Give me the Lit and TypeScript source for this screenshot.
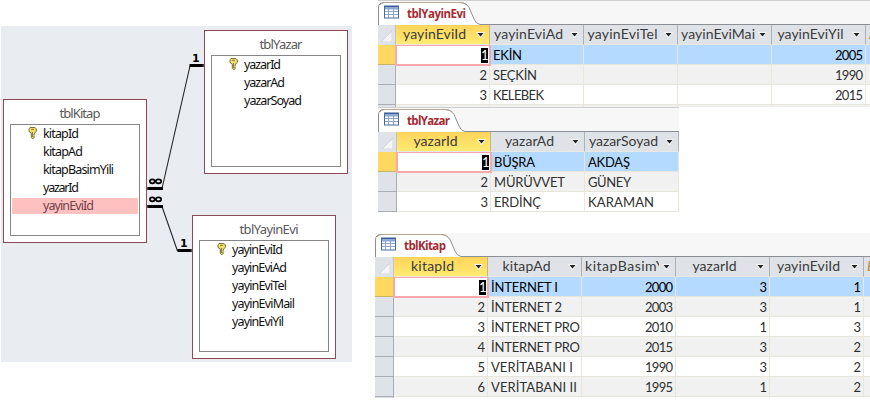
import { LitElement, html, css, svg } from "lit";
import { customElement, property } from "lit/decorators.js";
import { classMap } from "lit/directives/class-map.js";
import { styleMap } from "lit/directives/style-map.js";

/** A label whose tracking is adjusted so that it spans a given width. */
@customElement("fit-text")
class FitText extends LitElement {
  @property() text = "";
  @property({ type: Number }) span = 0;

  static styles = css`
    :host { display: inline-block; white-space: pre; }
    span { display: inline-block; }
  `;

  render() {
    return html`<span>${this.text}</span>`;
  }

  updated() {
    const el = this.renderRoot.querySelector("span") as HTMLElement;
    el.style.letterSpacing = "0px";
    const count = this.text.length;
    if (!this.span || count < 2) return;
    const gap = (this.span - el.getBoundingClientRect().width) / (count - 1);
    el.style.letterSpacing = `${gap}px`;
    el.style.marginRight = `${-gap}px`;
  }
}

type Label = [text: string, width: number];

@customElement("relation-table")
class RelationTable extends LitElement {
  @property() name = "";
  @property({ type: Number }) span = 0;
  @property({ attribute: false }) fields: Label[] = [];
  @property() selected = "";

  static styles = css`
    :host {
      display: block; box-sizing: border-box; width: 144px; height: 144px;
      border: 1px solid #874c58; background: #fff; padding: 0 6px;
      font: 12.5px/20px "Noto Sans", "Open Sans", sans-serif; color: #111;
      box-shadow: 0 0 2px #f5dfe4;
    }
    .title { height: 24px; line-height: 27px; text-align: center; font-size: 13px; color: #595959; padding-left: 10px; }
    .list { box-sizing: border-box; height: 112px; border: 1px solid #858585; padding: 0 1px; }
    .field { display: flex; height: 18px; align-items: center; }
    .field.on { background: #ffc0c0; height: 16px; margin: 1px 0; color: #70434a; line-height: 18px; }
    .icon { width: 31px; flex: none; display: flex; justify-content: flex-end; box-sizing: border-box; padding-right: 6px; height: 14px; }
  `;

  render() {
    return html`
      <div class="title"><fit-text .text=${this.name} .span=${this.span}></fit-text></div>
      <div class="list">
        ${this.fields.map(([text, width], i) => html`
          <div class=${classMap({ field: true, on: text === this.selected })}>
            <div class="icon">${i === 0 ? svg`
              <svg width="9" height="12" viewBox="0 0 9 12">
                <path d="M2 .5h5l1.3 1.4v2.4L6.5 6.2v1l-.9.9.9.8-.9 1 .7.7-1.6 1-1.4-1V6.2L1 4.5V1.9z"
                  fill="#efe06a" stroke="#6c6330" stroke-width=".9"/>
                <path d="M3.2 2.4h2.7M4.4 5v5" stroke="#756b35" stroke-width=".9"/>
              </svg>` : null}</div>
            <fit-text .text=${text} .span=${width}></fit-text>
          </div>`)}
      </div>`;
  }
}

interface Column { title: string; width: number; text: number; left?: boolean; numeric?: boolean; rest?: boolean }

@customElement("data-sheet")
class DataSheet extends LitElement {
  @property() name = "";
  @property({ type: Number }) span = 0;
  @property({ type: Number }) tab = 100;
  @property({ type: Number }) selector = 18;
  @property({ attribute: false }) columns: Column[] = [];
  @property({ attribute: false }) rows: Label[][] = [];

  static styles = css`
    :host { display: block; overflow: hidden; background: #fff; font: 13px/20px Lato, "Noto Sans", sans-serif; color: #303030; }
    .strip { display: block; height: 25px; background: #f7f7f7; border-top: 1px solid var(--strip-edge, #cfcfcf); box-sizing: border-box; position: relative; }
    .shape { display: block; }
    .caption { position: absolute; left: 29px; top: 3px; font: bold 11.5px/20px "Open Sans", "Noto Sans", sans-serif; color: #a52a33; }
    .grid { display: grid; grid-auto-rows: 20px; }
    .head, .cell, .sel, .corner { box-sizing: border-box; height: 20px; overflow: hidden; white-space: nowrap; display: flex; }
    .head { background: #dfe3e8; border-right: 1px solid #adb1b8; border-bottom: 1px solid #e8e8e4; font-size: 14px; line-height: 18px; color: #3b3b3b; }
    .head.key { background: linear-gradient(#ffd45c, #ffeb70); border-right-color: #c8b77d; }
    .head.new { border-right: 0; color: #c58a32; font-style: italic; padding-left: 3px; }
    .label { flex: 1; min-width: 0; overflow: hidden; display: flex; justify-content: center; }
    .label.left { justify-content: flex-start; padding-left: 3px; }
    .arrow { width: 15px; flex: none; display: flex; align-items: center; justify-content: center; padding-right: 1px; }
    .corner { background: #dfe3e8; border-right: 1px solid #c0c4ca; justify-content: flex-end; align-items: flex-end; padding: 0 3px 3px 0; }
    .sel { background: #dfe3e8; border-right: 1px solid #a9adb5; border-bottom: 1px solid #a9adb5; }
    .sel.on { background: #ffd95f; border-bottom-color: #c7b36d; }
    .cell { border-right: 1px solid #e9e7dc; border-bottom: 1px solid #e9e7dc; padding-left: 3px; }
    .cell.alt { background: #f1f1f1; }
    .cell.on { background: #b5daff; color: #000; }
    .cell.num { justify-content: flex-end; padding: 0 2px 0 0; }
    .cell.rest { border-right: 0; }
    .cell.active { z-index: 1; margin: 0 -1px; height: 21px; background: #fff; border: 2px solid #f8a9ab; border-top-width: 1px; padding: 0 1px 0 0; line-height: 18px; }
    .mark { background: #000; color: #fff; width: 7px; height: 15px; margin-top: 2px; line-height: 15px; text-align: center; }
  `;

  private heading(col: Column, i: number) {
    if (col.rest) return html`<div class="head new">${col.title}</div>`;
    return html`
      <div class=${classMap({ head: true, key: i === 0 })}>
        <div class=${classMap({ label: true, left: !!col.left })}><fit-text .text=${col.title} .span=${col.text}></fit-text></div>
        <div class="arrow"><svg width="9" height="6"><path d="M0 0h9L5 6H4z" fill="#f4f5f6"/><path d="M1.5 1h6L4.5 4.5z" fill="#252525"/></svg></div>
      </div>`;
  }

  render() {
    const t = this.tab;
    const tracks = [this.selector, ...this.columns.map((c) => c.width)].map((w) => `${w}px`).join(" ");
    const edge = `H${t - 17}Q${t - 11} 1.5 ${t - 8} 6.5L${t - 3} 18Q${t - 1} 23 ${t + 3} 23.5`;
    return html`
      <div class="strip">
        <svg class="shape" width="520" height="24">
          <path d="M0 25V7Q0 1.5 6 1.5${edge}V25Z" fill="#fff"/>
          <path d="M.5 24V7Q.5 1.5 6 1.5${edge}H520" fill="none" stroke="#8d8f96"/>
          <path d="M2 4Q3 1.5 7 1.5H${t - 17}Q${t - 12} 1.5 ${t - 9} 5" fill="none" stroke="#b7a89a"/>
          <rect x="6" y="5" width="15" height="12" fill="#fff"/>
          <path d="M6 5.5h15" stroke="#3b5d9b" stroke-width="2"/>
          <path d="M6 7.5h15" stroke="#8ba8d5" stroke-width="2"/>
          <path d="M6 10.5h15M6 13.5h15M10.5 8v9M15.5 8v9" stroke="#8da6c8"/>
          <path d="M6.5 5v12M20.5 5v12M6 17h15" stroke="#486a9e" fill="none"/>
        </svg>
        <fit-text class="caption" .text=${this.name} .span=${this.span}></fit-text>
      </div>
      <div class="grid" style=${styleMap({ gridTemplateColumns: tracks })}>
        <div class="corner"><svg width="11" height="11"><path d="M11 0v11H0z" fill="#f3f5f7" stroke="#c6cbd3" stroke-width=".7"/></svg></div>
        ${this.columns.map((c, i) => this.heading(c, i))}
        ${this.rows.map((row, r) => html`
          <div class=${classMap({ sel: true, on: r === 0 })}></div>
          ${this.columns.map((c, i) => {
            const [text, width] = row[i] ?? ["", 0];
            const active = r === 0 && i === 0;
            return html`<div class=${classMap({ cell: true, alt: r % 2 === 1, on: r === 0 && !active, num: !!c.numeric, rest: !!c.rest, active })}>
              ${active ? html`<span class="mark">${text}</span>` : text ? html`<fit-text .text=${text} .span=${width}></fit-text>` : null}
            </div>`;
          })}`)}
      </div>`;
  }
}

const n = (value: number): Label => [String(value), value > 999 ? 28 : 0];

const publisherColumns: Column[] = [
  { title: "yayinEviId", width: 94, text: 63, numeric: true },
  { title: "yayinEviAd", width: 94, text: 69 },
  { title: "yayinEviTel", width: 94, text: 70 },
  { title: "yayinEviMai", width: 94, text: 74, left: true },
  { title: "yayinEviYil", width: 94, text: 66, numeric: true },
  { title: "A", width: 10, text: 0, rest: true },
];
const publisherRows: Label[][] = [
  [n(1), ["EKİN", 29], ["", 0], ["", 0], n(2005)],
  [n(2), ["SEÇKİN", 44], ["", 0], ["", 0], n(1990)],
  [n(3), ["KELEBEK", 51], ["", 0], ["", 0], n(2015)],
  [],
];
const authorColumns: Column[] = [
  { title: "yazarId", width: 94, text: 44, numeric: true },
  { title: "yazarAd", width: 94, text: 49 },
  { title: "yazarSoyad", width: 94, text: 69 },
];
const authorRows: Label[][] = [
  [n(1), ["BÜŞRA", 41], ["AKDAŞ", 42]],
  [n(2), ["MÜRÜVVET", 71], ["GÜNEY", 43]],
  [n(3), ["ERDİNÇ", 47], ["KARAMAN", 66]],
];
const bookColumns: Column[] = [
  { title: "kitapId", width: 94, text: 43, numeric: true },
  { title: "kitapAd", width: 94, text: 48 },
  { title: "kitapBasimYili", width: 94, text: 91, left: true, numeric: true },
  { title: "yazarId", width: 94, text: 44, numeric: true },
  { title: "yayinEviId", width: 94, text: 63, numeric: true },
  { title: "E", width: 10, text: 0, rest: true },
];
const bookRows: Label[][] = [
  [n(1), ["İNTERNET I", 67], n(2000), n(3), n(1)],
  [n(2), ["İNTERNET 2", 71], n(2003), n(3), n(1)],
  [n(3), ["İNTERNET PRO", 89], n(2010), n(1), n(3)],
  [n(4), ["İNTERNET PRO", 89], n(2015), n(3), n(2)],
  [n(5), ["VERİTABANI I", 82], n(1990), n(3), n(2)],
  [n(6), ["VERİTABANI II", 86], n(1995), n(1), n(2)],
  [],
];

@customElement("app-root")
class AppRoot extends LitElement {
  static styles = css`
    :host { display: flex; width: 870px; height: 404px; overflow: hidden; background: #fff; }
    .diagram { position: relative; flex: none; width: 351px; height: 336px; margin: 26px 0 0 1px; background: #e9edf2; }
    .links { display: block; }
    .books, .authors, .publishers { position: absolute; }
    .books { left: 2px; top: 73px; }
    .authors { left: 203px; top: 4px; }
    .publishers { left: 191px; top: 189px; }
    .links text { font: bold 11px "DejaVu Sans", sans-serif; }
    .sheets { display: flex; flex-direction: column; margin-left: 23px; width: 495px; }
    .first { margin-left: 3px; height: 107px; }
    .second { margin: 0 0 20px 3px; width: 301px; height: 105px; }
    .third { height: 166px; --strip-edge: #fff; }
  `;

  render() {
    return html`
      <div class="diagram">
        <svg class="links" width="351" height="336">
          <path d="M161 162.5L189 40M161 180.5L176.5 225" fill="none" stroke="#262626" stroke-width="1.1"/>
          <path d="M188.5 39.5H203M146 162.5h16M146 180.5h16M176.500 224.500H191" stroke="#000" stroke-width="3"/>
          <text x="191" y="36">1</text>
          <text x="179" y="221">1</text>
          <g fill="none" stroke="#000" stroke-width="1.7">
            <ellipse cx="151.300" cy="155.300" rx="2.400" ry="2"/><ellipse cx="157.500" cy="155.300" rx="2.700" ry="2"/>
            <ellipse cx="151.300" cy="173.300" rx="2.400" ry="2"/><ellipse cx="157.500" cy="173.300" rx="2.700" ry="2"/>
          </g>
        </svg>
        <relation-table class="books" name="tblKitap" span="41" selected="yayinEviId"
          .fields=${[["kitapId", 36], ["kitapAd", 40], ["kitapBasimYili", 71], ["yazarId", 36], ["yayinEviId", 51]]}></relation-table>
        <relation-table class="authors" name="tblYazar" span="43"
          .fields=${[["yazarId", 37], ["yazarAd", 41], ["yazarSoyad", 58]]}></relation-table>
        <relation-table class="publishers" name="tblYayinEvi" span="59"
          .fields=${[["yayinEviId", 51], ["yayinEviAd", 55], ["yayinEviTel", 55], ["yayinEviMail", 63], ["yayinEviYil", 52]]}></relation-table>
      </div>
      <div class="sheets">
        <data-sheet class="first" name="tblYayinEvi" span="59" tab="99" .columns=${publisherColumns} .rows=${publisherRows}></data-sheet>
        <data-sheet class="second" name="tblYazar" span="43" tab="84" selector="19" .columns=${authorColumns} .rows=${authorRows}></data-sheet>
        <data-sheet class="third" name="tblKitap" span="42" tab="83" selector="19" .columns=${bookColumns} .rows=${bookRows}></data-sheet>
      </div>`;
  }
}
